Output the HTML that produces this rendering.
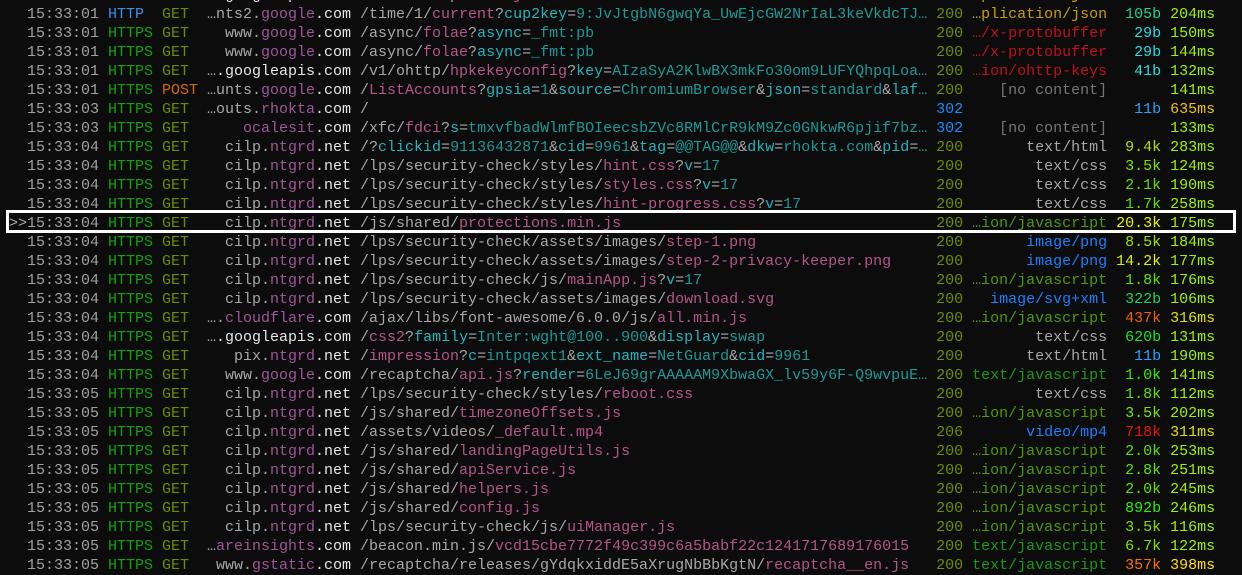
<!DOCTYPE html>
<html><head><meta charset="utf-8">
<style>
html,body{margin:0;padding:0;background:#0c0c0c;width:1242px;height:575px;overflow:hidden}
#w{position:absolute;left:9px;top:-14px;font-family:"Liberation Mono",monospace;font-size:15px;line-height:19px;color:#a8a8a8}
.r{height:19px;overflow:hidden;white-space:pre}
.r>span{display:inline-block;overflow:hidden;vertical-align:top;height:19px}
.m{width:2ch}.t{width:9ch;color:#a0a0a0}.s{width:6ch}.me{width:5ch}
.h{width:16ch;text-align:right;margin-right:1ch;color:#a8a8a8}
.p{width:64ch}.st{width:4ch;color:#6b8e00}.c{width:15ch;text-align:right;margin-right:1ch}
.z{width:5ch;text-align:right;margin-right:1ch}.d{width:5ch;text-align:right;color:#a0f000}
.hs{color:#13a10e}.hp{color:#3b8eea}.g{color:#6b8e00}.po{color:#d46a00}
.dm{color:#a0559a}.tl{color:#e6e6e6}
.f{color:#b5558c}.k{color:#22b5c0}.v{color:#1a9a9a}
.aj{color:#c8a000}.pb{color:#c0101e}.gr{color:#a8a8a8}.nc{color:#767676}
.ij{color:#4e9a0a}.tj{color:#1a9a1a}.im{color:#1a80ff}.b3{color:#1a8cff}
#sel{position:absolute;left:6px;top:210px;width:1230px;height:23px;box-sizing:border-box;border:3px solid #fff}
</style></head><body>
<div id="w">
<div class="r"><span class="m"></span><span class="t">15:33:01</span><span class="s hs">HTTPS</span><span class="me po">POST</span><span class="h">…<span class="tl">googleapis.com</span></span><span class="p">/service/update2/<span class="f">json</span></span><span class="st">200</span><span class="c aj">…plication/json</span><span class="z" style="color:#20d090">1.1k</span><span class="d">44ms</span></div>
<div class="r"><span class="m"></span><span class="t">15:33:01</span><span class="s hp">HTTP</span><span class="me g">GET</span><span class="h">…nts2.<span class="dm">google</span><span class="tl">.com</span></span><span class="p">/time/1/<span class="f">current</span>?<span class="k">cup2key</span>=<span class="v">9:JvJtgbN6gwqYa_UwEjcGW2NrIaL3keVkdcTJ…</span></span><span class="st">200</span><span class="c aj">…plication/json</span><span class="z" style="color:#20d090">105b</span><span class="d">204ms</span></div>
<div class="r"><span class="m"></span><span class="t">15:33:01</span><span class="s hs">HTTPS</span><span class="me g">GET</span><span class="h">www.<span class="dm">google</span><span class="tl">.com</span></span><span class="p">/async/<span class="f">folae</span>?<span class="k">async</span>=<span class="v">_fmt:pb</span></span><span class="st">200</span><span class="c pb">…/x-protobuffer</span><span class="z" style="color:#20e0e0">29b</span><span class="d">150ms</span></div>
<div class="r"><span class="m"></span><span class="t">15:33:01</span><span class="s hs">HTTPS</span><span class="me g">GET</span><span class="h">www.<span class="dm">google</span><span class="tl">.com</span></span><span class="p">/async/<span class="f">folae</span>?<span class="k">async</span>=<span class="v">_fmt:pb</span></span><span class="st">200</span><span class="c pb">…/x-protobuffer</span><span class="z" style="color:#20e0e0">29b</span><span class="d">144ms</span></div>
<div class="r"><span class="m"></span><span class="t">15:33:01</span><span class="s hs">HTTPS</span><span class="me g">GET</span><span class="h">…<span class="tl">.googleapis.com</span></span><span class="p">/v1/ohttp/<span class="f">hpkekeyconfig</span>?<span class="k">key</span>=<span class="v">AIzaSyA2KlwBX3mkFo30om9LUFYQhpqLoa…</span></span><span class="st">200</span><span class="c pb">…ion/ohttp-keys</span><span class="z" style="color:#20e0e0">41b</span><span class="d">132ms</span></div>
<div class="r"><span class="m"></span><span class="t">15:33:01</span><span class="s hs">HTTPS</span><span class="me po">POST</span><span class="h">…unts.<span class="dm">google</span><span class="tl">.com</span></span><span class="p">/<span class="f">ListAccounts</span>?<span class="k">gpsia</span>=<span class="v">1</span>&amp;<span class="k">source</span>=<span class="v">ChromiumBrowser</span>&amp;<span class="k">json</span>=<span class="v">standard</span>&amp;<span class="k">laf</span><span class="v">…</span></span><span class="st">200</span><span class="c nc">[no content]</span><span class="z"></span><span class="d">141ms</span></div>
<div class="r"><span class="m"></span><span class="t">15:33:03</span><span class="s hs">HTTPS</span><span class="me g">GET</span><span class="h">…outs.<span class="dm">rhokta</span><span class="tl">.com</span></span><span class="p">/</span><span class="st b3">302</span><span class="c"></span><span class="z" style="color:#2aa0ff">11b</span><span class="d" style="color:#f0c000">635ms</span></div>
<div class="r"><span class="m"></span><span class="t">15:33:03</span><span class="s hs">HTTPS</span><span class="me g">GET</span><span class="h"><span class="dm">ocalesit</span><span class="tl">.com</span></span><span class="p">/xfc/<span class="f">fdci</span>?<span class="k">s</span>=<span class="v">tmxvfbadWlmfBOIeecsbZVc8RMlCrR9kM9Zc0GNkwR6pjif7bz…</span></span><span class="st b3">302</span><span class="c nc">[no content]</span><span class="z"></span><span class="d">133ms</span></div>
<div class="r"><span class="m"></span><span class="t">15:33:04</span><span class="s hs">HTTPS</span><span class="me g">GET</span><span class="h">cilp.<span class="dm">ntgrd</span><span class="tl">.net</span></span><span class="p">/?<span class="k">clickid</span>=<span class="v">91136432871</span>&amp;<span class="k">cid</span>=<span class="v">9961</span>&amp;<span class="k">tag</span>=<span class="v">@@TAG@@</span>&amp;<span class="k">dkw</span>=<span class="v">rhokta.com</span>&amp;<span class="k">pid</span>=<span class="v">…</span></span><span class="st">200</span><span class="c gr">text/html</span><span class="z" style="color:#b0e000">9.4k</span><span class="d">283ms</span></div>
<div class="r"><span class="m"></span><span class="t">15:33:04</span><span class="s hs">HTTPS</span><span class="me g">GET</span><span class="h">cilp.<span class="dm">ntgrd</span><span class="tl">.net</span></span><span class="p">/lps/security-check/styles/<span class="f">hint.css</span>?<span class="k">v</span>=<span class="v">17</span></span><span class="st">200</span><span class="c gr">text/css</span><span class="z" style="color:#80e000">3.5k</span><span class="d">124ms</span></div>
<div class="r"><span class="m"></span><span class="t">15:33:04</span><span class="s hs">HTTPS</span><span class="me g">GET</span><span class="h">cilp.<span class="dm">ntgrd</span><span class="tl">.net</span></span><span class="p">/lps/security-check/styles/<span class="f">styles.css</span>?<span class="k">v</span>=<span class="v">17</span></span><span class="st">200</span><span class="c gr">text/css</span><span class="z" style="color:#60e000">2.1k</span><span class="d">190ms</span></div>
<div class="r"><span class="m"></span><span class="t">15:33:04</span><span class="s hs">HTTPS</span><span class="me g">GET</span><span class="h">cilp.<span class="dm">ntgrd</span><span class="tl">.net</span></span><span class="p">/lps/security-check/styles/<span class="f">hint-progress.css</span>?<span class="k">v</span>=<span class="v">17</span></span><span class="st">200</span><span class="c gr">text/css</span><span class="z" style="color:#60e000">1.7k</span><span class="d">258ms</span></div>
<div class="r"><span class="m">&gt;&gt;</span><span class="t">15:33:04</span><span class="s hs">HTTPS</span><span class="me g">GET</span><span class="h">cilp.<span class="dm">ntgrd</span><span class="tl">.net</span></span><span class="p">/js/shared/<span class="f">protections.min.js</span></span><span class="st">200</span><span class="c ij">…ion/javascript</span><span class="z" style="color:#f0f000">20.3k</span><span class="d">175ms</span></div>
<div class="r"><span class="m"></span><span class="t">15:33:04</span><span class="s hs">HTTPS</span><span class="me g">GET</span><span class="h">cilp.<span class="dm">ntgrd</span><span class="tl">.net</span></span><span class="p">/lps/security-check/assets/images/<span class="f">step-1.png</span></span><span class="st">200</span><span class="c im">image/png</span><span class="z" style="color:#a0e000">8.5k</span><span class="d">184ms</span></div>
<div class="r"><span class="m"></span><span class="t">15:33:04</span><span class="s hs">HTTPS</span><span class="me g">GET</span><span class="h">cilp.<span class="dm">ntgrd</span><span class="tl">.net</span></span><span class="p">/lps/security-check/assets/images/<span class="f">step-2-privacy-keeper.png</span></span><span class="st">200</span><span class="c im">image/png</span><span class="z" style="color:#e0f000">14.2k</span><span class="d">177ms</span></div>
<div class="r"><span class="m"></span><span class="t">15:33:04</span><span class="s hs">HTTPS</span><span class="me g">GET</span><span class="h">cilp.<span class="dm">ntgrd</span><span class="tl">.net</span></span><span class="p">/lps/security-check/js/<span class="f">mainApp.js</span>?<span class="k">v</span>=<span class="v">17</span></span><span class="st">200</span><span class="c ij">…ion/javascript</span><span class="z" style="color:#60e000">1.8k</span><span class="d">176ms</span></div>
<div class="r"><span class="m"></span><span class="t">15:33:04</span><span class="s hs">HTTPS</span><span class="me g">GET</span><span class="h">cilp.<span class="dm">ntgrd</span><span class="tl">.net</span></span><span class="p">/lps/security-check/assets/images/<span class="f">download.svg</span></span><span class="st">200</span><span class="c im">image/svg+xml</span><span class="z" style="color:#20d060">322b</span><span class="d">106ms</span></div>
<div class="r"><span class="m"></span><span class="t">15:33:04</span><span class="s hs">HTTPS</span><span class="me g">GET</span><span class="h">….<span class="dm">cloudflare</span><span class="tl">.com</span></span><span class="p">/ajax/libs/font-awesome/6.0.0/js/<span class="f">all.min.js</span></span><span class="st">200</span><span class="c ij">…ion/javascript</span><span class="z" style="color:#f06000">437k</span><span class="d" style="color:#e0e000">316ms</span></div>
<div class="r"><span class="m"></span><span class="t">15:33:04</span><span class="s hs">HTTPS</span><span class="me g">GET</span><span class="h">…<span class="tl">.googleapis.com</span></span><span class="p">/<span class="f">css2</span>?<span class="k">family</span>=<span class="v">Inter:wght@100..900</span>&amp;<span class="k">display</span>=<span class="v">swap</span></span><span class="st">200</span><span class="c gr">text/css</span><span class="z" style="color:#20e020">620b</span><span class="d">131ms</span></div>
<div class="r"><span class="m"></span><span class="t">15:33:04</span><span class="s hs">HTTPS</span><span class="me g">GET</span><span class="h">pix.<span class="dm">ntgrd</span><span class="tl">.net</span></span><span class="p">/<span class="f">impression</span>?<span class="k">c</span>=<span class="v">intpqext1</span>&amp;<span class="k">ext_name</span>=<span class="v">NetGuard</span>&amp;<span class="k">cid</span>=<span class="v">9961</span></span><span class="st">200</span><span class="c gr">text/html</span><span class="z" style="color:#2aa0ff">11b</span><span class="d">190ms</span></div>
<div class="r"><span class="m"></span><span class="t">15:33:04</span><span class="s hs">HTTPS</span><span class="me g">GET</span><span class="h">www.<span class="dm">google</span><span class="tl">.com</span></span><span class="p">/recaptcha/<span class="f">api.js</span>?<span class="k">render</span>=<span class="v">6LeJ69grAAAAAM9XbwaGX_lv59y6F-Q9wvpuE…</span></span><span class="st">200</span><span class="c tj">text/javascript</span><span class="z" style="color:#30f000">1.0k</span><span class="d">141ms</span></div>
<div class="r"><span class="m"></span><span class="t">15:33:05</span><span class="s hs">HTTPS</span><span class="me g">GET</span><span class="h">cilp.<span class="dm">ntgrd</span><span class="tl">.net</span></span><span class="p">/lps/security-check/styles/<span class="f">reboot.css</span></span><span class="st">200</span><span class="c gr">text/css</span><span class="z" style="color:#60e000">1.8k</span><span class="d">112ms</span></div>
<div class="r"><span class="m"></span><span class="t">15:33:05</span><span class="s hs">HTTPS</span><span class="me g">GET</span><span class="h">cilp.<span class="dm">ntgrd</span><span class="tl">.net</span></span><span class="p">/js/shared/<span class="f">timezoneOffsets.js</span></span><span class="st">200</span><span class="c ij">…ion/javascript</span><span class="z" style="color:#80e000">3.5k</span><span class="d">202ms</span></div>
<div class="r"><span class="m"></span><span class="t">15:33:05</span><span class="s hs">HTTPS</span><span class="me g">GET</span><span class="h">cilp.<span class="dm">ntgrd</span><span class="tl">.net</span></span><span class="p">/assets/videos/<span class="f">_default.mp4</span></span><span class="st">206</span><span class="c im">video/mp4</span><span class="z" style="color:#e81010">718k</span><span class="d" style="color:#e0e000">311ms</span></div>
<div class="r"><span class="m"></span><span class="t">15:33:05</span><span class="s hs">HTTPS</span><span class="me g">GET</span><span class="h">cilp.<span class="dm">ntgrd</span><span class="tl">.net</span></span><span class="p">/js/shared/<span class="f">landingPageUtils.js</span></span><span class="st">200</span><span class="c ij">…ion/javascript</span><span class="z" style="color:#60e000">2.0k</span><span class="d">253ms</span></div>
<div class="r"><span class="m"></span><span class="t">15:33:05</span><span class="s hs">HTTPS</span><span class="me g">GET</span><span class="h">cilp.<span class="dm">ntgrd</span><span class="tl">.net</span></span><span class="p">/js/shared/<span class="f">apiService.js</span></span><span class="st">200</span><span class="c ij">…ion/javascript</span><span class="z" style="color:#60e000">2.8k</span><span class="d">251ms</span></div>
<div class="r"><span class="m"></span><span class="t">15:33:05</span><span class="s hs">HTTPS</span><span class="me g">GET</span><span class="h">cilp.<span class="dm">ntgrd</span><span class="tl">.net</span></span><span class="p">/js/shared/<span class="f">helpers.js</span></span><span class="st">200</span><span class="c ij">…ion/javascript</span><span class="z" style="color:#60e000">2.0k</span><span class="d">245ms</span></div>
<div class="r"><span class="m"></span><span class="t">15:33:05</span><span class="s hs">HTTPS</span><span class="me g">GET</span><span class="h">cilp.<span class="dm">ntgrd</span><span class="tl">.net</span></span><span class="p">/js/shared/<span class="f">config.js</span></span><span class="st">200</span><span class="c ij">…ion/javascript</span><span class="z" style="color:#30f000">892b</span><span class="d">246ms</span></div>
<div class="r"><span class="m"></span><span class="t">15:33:05</span><span class="s hs">HTTPS</span><span class="me g">GET</span><span class="h">cilp.<span class="dm">ntgrd</span><span class="tl">.net</span></span><span class="p">/lps/security-check/js/<span class="f">uiManager.js</span></span><span class="st">200</span><span class="c ij">…ion/javascript</span><span class="z" style="color:#80e000">3.5k</span><span class="d">116ms</span></div>
<div class="r"><span class="m"></span><span class="t">15:33:05</span><span class="s hs">HTTPS</span><span class="me g">GET</span><span class="h">…<span class="dm">areinsights</span><span class="tl">.com</span></span><span class="p">/beacon.min.js/<span class="f">vcd15cbe7772f49c399c6a5babf22c1241717689176015</span></span><span class="st">200</span><span class="c tj">text/javascript</span><span class="z" style="color:#80e000">6.7k</span><span class="d">122ms</span></div>
<div class="r"><span class="m"></span><span class="t">15:33:05</span><span class="s hs">HTTPS</span><span class="me g">GET</span><span class="h">www.<span class="dm">gstatic</span><span class="tl">.com</span></span><span class="p">/recaptcha/releases/gYdqkxiddE5aXrugNbBbKgtN/<span class="f">recaptcha__en.js</span></span><span class="st">200</span><span class="c tj">text/javascript</span><span class="z" style="color:#ff7000">357k</span><span class="d" style="color:#ffe000">398ms</span></div>
</div>
<div id="sel"></div>
</body></html>
